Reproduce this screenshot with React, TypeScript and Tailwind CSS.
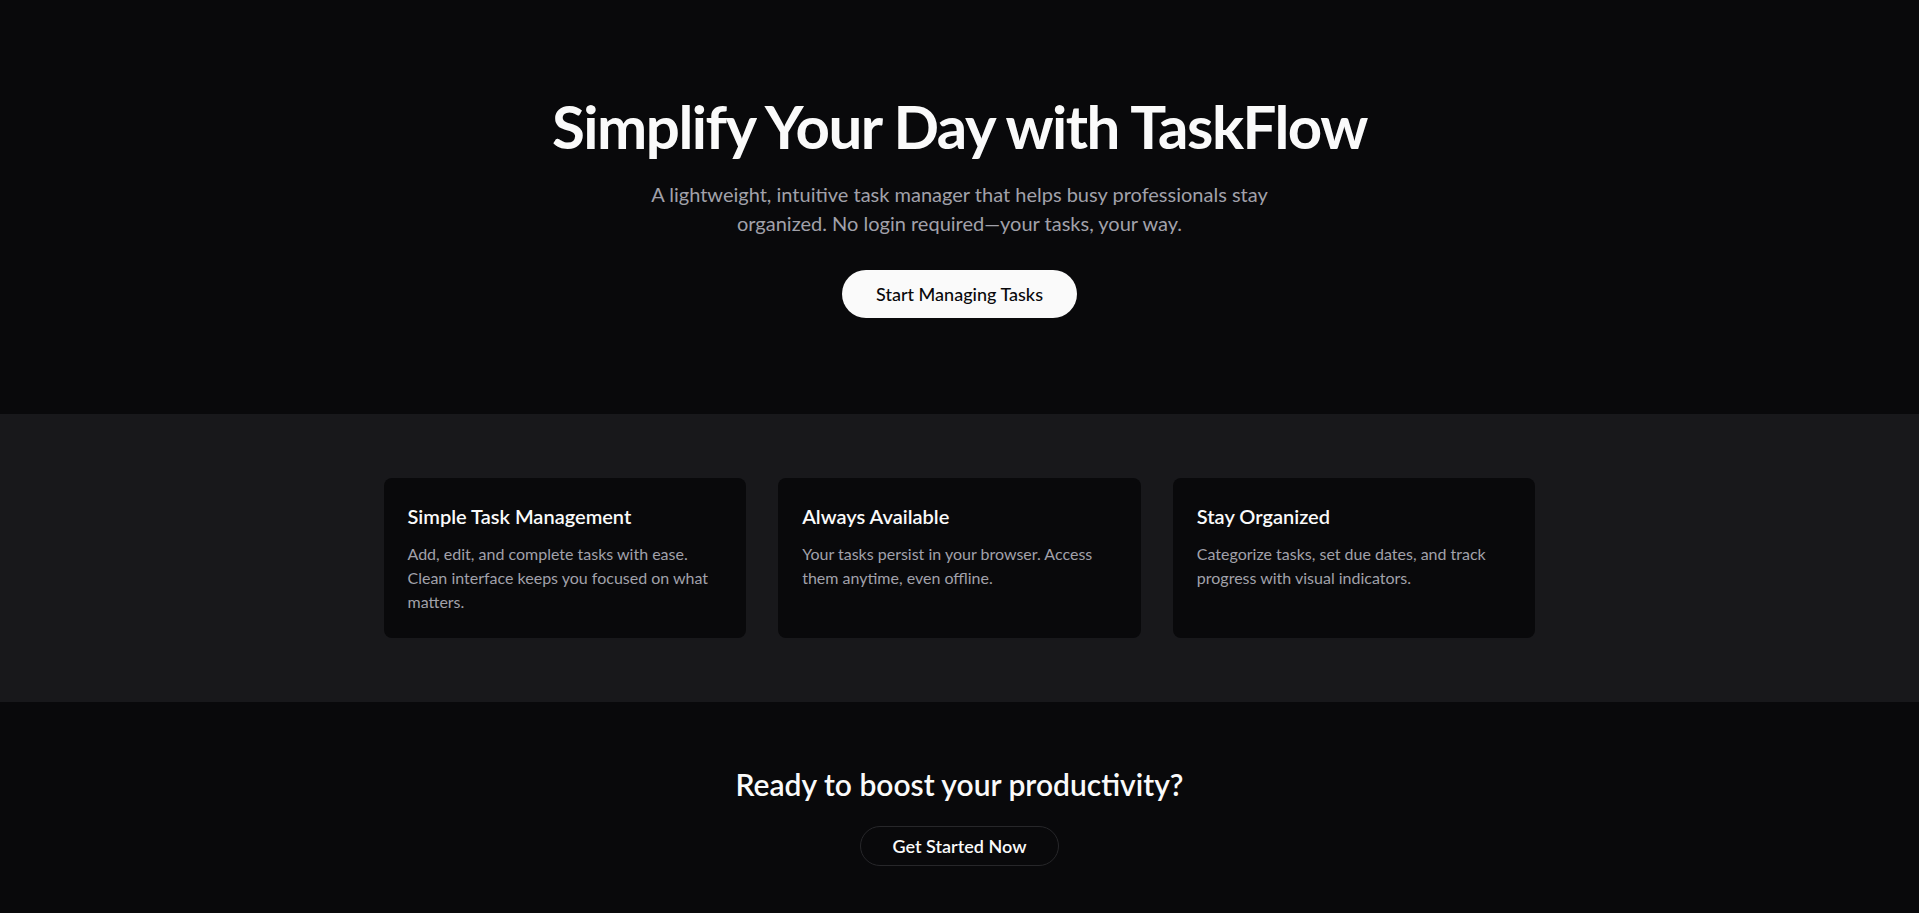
import React from "react";

const features = [
  {
    title: "Simple Task Management",
    text: "Add, edit, and complete tasks with ease. Clean interface keeps you focused on what matters.",
  },
  {
    title: "Always Available",
    text: "Your tasks persist in your browser. Access them anytime, even offline.",
  },
  {
    title: "Stay Organized",
    text: "Categorize tasks, set due dates, and track progress with visual indicators.",
  },
];

export default function App() {
  return (
    <main className="min-h-screen bg-[#09090b] text-[#fafafa] font-['Lato',sans-serif]">
      {/* Hero */}
      <section className="py-24 px-6 text-center">
        <h1 className="text-6xl font-bold tracking-tight mb-6">
          Simplify Your Day with TaskFlow
        </h1>
        <p className="text-xl leading-[29px] text-[#a1a1aa] max-w-2xl mx-auto mb-8">
          A lightweight, intuitive task manager that helps busy professionals
          stay
          <br />
          organized. No login required—your tasks, your way.
        </p>
        <button className="h-12 px-[34px] rounded-full bg-[#fafafa] text-[#09090b] text-lg font-medium">
          Start Managing Tasks
        </button>
      </section>

      {/* Features */}
      <section className="py-16 bg-[#18181b]">
        <div className="max-w-6xl mx-auto grid grid-cols-3 gap-8">
          {features.map((f) => (
            <div key={f.title} className="rounded-lg bg-[#09090b] p-6">
              <h3 className="text-xl font-semibold mb-3">{f.title}</h3>
              <p className="text-base leading-6 text-[#a1a1aa]">{f.text}</p>
            </div>
          ))}
        </div>
      </section>

      {/* CTA */}
      <section className="py-16 text-center">
        <h2 className="text-3xl font-semibold mb-6">
          Ready to boost your productivity?
        </h2>
        <button className="h-10 px-8 rounded-full border border-[#27272a] bg-[#09090b] text-lg font-semibold">
          Get Started Now
        </button>
      </section>
    </main>
  );
}
